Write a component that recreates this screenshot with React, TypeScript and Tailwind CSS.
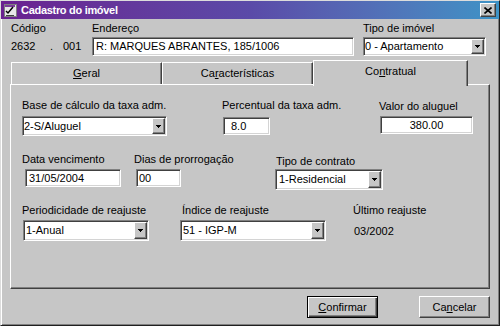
import React from 'react';

const sunken =
  'bg-white border border-t-[#808080] border-l-[#808080] border-r-white border-b-white shadow-[inset_1px_1px_#404040,inset_-1px_-1px_#d4d4d4]';
const raised =
  'bg-[#c6c6c6] border border-t-white border-l-white border-r-[#404040] border-b-[#404040] shadow-[inset_-1px_-1px_#808080]';

function Arrow() {
  return (
    <svg width="5" height="3" viewBox="0 0 5 3" shapeRendering="crispEdges">
      <path d="M0 0h5v1H0zM1 1h3v1H1zM2 2h1v1H2z" fill="#000" />
    </svg>
  );
}

function Label({ children, className }: { children: React.ReactNode; className?: string }) {
  return <div className={`h-[13px] leading-[13px] whitespace-nowrap ${className ?? ''}`}>{children}</div>;
}

function Field({ value, className }: { value: string; className?: string }) {
  return (
    <div className={`${sunken} flex items-center whitespace-nowrap overflow-hidden ${className ?? ''}`}>
      {value}
    </div>
  );
}

function Combo({ value, className, textClass }: { value: string; className?: string; textClass?: string }) {
  return (
    <div className={`${sunken} flex p-[1px] ${className ?? ''}`}>
      <span className={`flex-1 flex items-center whitespace-nowrap overflow-hidden ${textClass ?? ''}`}>{value}</span>
      <span className={`${raised} w-[13px] flex items-center justify-center`}>
        <Arrow />
      </span>
    </div>
  );
}

function Tab({ children, selected, className }: { children: React.ReactNode; selected?: boolean; className?: string }) {
  if (selected) {
    return (
      <div
        className={`relative z-10 h-[26px] -mb-[2px] bg-[#c6c6c6] border-t border-l border-r border-t-white border-l-white border-r-[#404040] shadow-[inset_-1px_0_#808080] flex justify-center pt-[4px] ${className ?? ''}`}
      >
        <span className="h-[13px] leading-[13px]">{children}</span>
      </div>
    );
  }
  return (
    <div
      className={`h-[22px] bg-[#c6c6c6] border-t border-l border-r border-t-white border-l-white border-r-[#404040] shadow-[inset_-1px_0_#808080] flex justify-center pt-[4px] ${className ?? ''}`}
    >
      <span className="h-[13px] leading-[13px]">{children}</span>
    </div>
  );
}

function TitleIcon() {
  return (
    <svg width="14" height="14" viewBox="0 0 14 14" shapeRendering="crispEdges">
      <rect x="1" y="1" width="12" height="12" fill="#e8e8e8" stroke="#808080" />
      <rect x="2" y="2" width="10" height="2" fill="#7a3d9a" />
      <path d="M3 8l2 2 5-6" stroke="#000" strokeWidth="1.5" fill="none" shapeRendering="auto" />
      <path d="M3 12h8" stroke="#404040" />
    </svg>
  );
}

export default function App() {
  return (
    <div className="w-[500px] h-[326px] bg-[#c6c6c6] border border-t-[#dcdcdc] border-l-[#dcdcdc] border-r-[#202020] border-b-[#202020] shadow-[inset_1px_1px_#fff,inset_-1px_-1px_#808080] flex flex-col text-[11px] text-black overflow-hidden font-['Liberation_Sans',Arial,sans-serif]">
      {/* title bar */}
      <div className="h-[18px] flex items-center bg-linear-to-r from-[#6a2190] via-[#5a4aa8] to-[#3c93c6]">
        <div className="ml-[2px] w-[14px] h-[14px]">
          <TitleIcon />
        </div>
        <span className="ml-[4px] pt-[1px] leading-[13px] font-bold text-white tracking-[-0.3px]">Cadastro do imóvel</span>
        <div className={`${raised} ml-auto mr-[3px] w-[16px] h-[14px] flex items-center justify-center`}>
          <svg width="8" height="7" viewBox="0 0 8 7">
            <path d="M0.5 0.5l7 6M7.5 0.5l-7 6" stroke="#000" strokeWidth="1.6" />
          </svg>
        </div>
      </div>

      {/* header fields */}
      <div className="mt-[3px] flex pl-[10px]">
        <div className="w-[81px]">
          <Label>Código</Label>
          <div className="mt-[2px] h-[19px] flex items-center">
            <span className="w-[39px]">2632</span>
            <span className="w-[13px]">.</span>
            <span>001</span>
          </div>
        </div>
        <div className="w-[271px]">
          <Label>Endereço</Label>
          <Field value="R: MARQUES ABRANTES, 185/1006" className="mt-[2px] w-[262px] h-[19px] pl-[3px]" />
        </div>
        <div className="w-[123px]">
          <Label>Tipo de imóvel</Label>
          <Combo value="0 - Apartamento" className="mt-[2px] w-[123px] h-[19px]" />
        </div>
      </div>

      {/* tabs */}
      <div className="mt-[4px] ml-[9px] w-[480px] h-[24px] pl-[1px] flex items-end">
        <Tab className="w-[151px]">
          <span className="underline">G</span>eral
        </Tab>
        <Tab className="w-[151px]">
          Ca<span className="underline">r</span>acterísticas
        </Tab>
        <Tab selected className="w-[155px]">
          Co<span className="underline">n</span>tratual
        </Tab>
      </div>
      <div className="ml-[9px] w-[480px] h-[205px] border border-t-white border-l-white border-r-[#404040] border-b-[#404040] shadow-[inset_-1px_-1px_#808080] pt-[14px] pl-[11px]">
        <div className="flex items-start">
          <div className="w-[200px]">
            <Label>Base de cálculo da taxa adm.</Label>
            <Combo value="2-S/Aluguel" className="mt-[4px] w-[145px] h-[20px]" />
          </div>
          <div className="w-[157px]">
            <Label>Percentual da taxa adm.</Label>
            <Field value="8.0" className="ml-[1px] mt-[5px] w-[47px] h-[18px] pl-[7px]" />
          </div>
          <div>
            <Label className="mt-[1px]">Valor do aluguel</Label>
            <Field value="380.00" className="ml-[1px] mt-[3px] w-[93px] h-[18px] justify-center" />
          </div>
        </div>

        <div className="mt-[17px] flex items-start">
          <div className="w-[112px]">
            <Label>Data vencimento</Label>
            <Field value="31/05/2004" className="ml-[3px] mt-[3px] w-[96px] h-[18px] pl-[3px]" />
          </div>
          <div className="w-[141px]">
            <Label>Dias de prorrogação</Label>
            <Field value="00" className="ml-[2px] mt-[3px] w-[45px] h-[18px] pl-[2px]" />
          </div>
          <div>
            <Label className="mt-[2px] ml-[1px]">Tipo de contrato</Label>
            <Combo value="1-Residencial" className="mt-[1px] w-[108px] h-[21px]" textClass="pl-[2px]" />
          </div>
        </div>

        <div className="mt-[14px] flex items-start">
          <div className="w-[158px]">
            <Label>Periodicidade de reajuste</Label>
            <Combo value="1-Anual" className="ml-[1px] mt-[3px] w-[126px] h-[21px]" textClass="pl-[1px]" />
          </div>
          <div className="w-[173px]">
            <Label className="ml-[2px]">Índice de reajuste</Label>
            <Combo value="51 - IGP-M" className="mt-[3px] w-[146px] h-[21px]" textClass="pl-[1px]" />
          </div>
          <div>
            <Label>Último reajuste</Label>
            <div className="ml-[1px] mt-[8px] h-[13px] leading-[13px]">03/2002</div>
          </div>
        </div>
      </div>

      {/* buttons */}
      <div className="mt-[7px] ml-[9px] w-[480px] flex justify-end gap-[41px]">
        <button className="w-[71px] h-[22px] bg-[#c6c6c6] border border-black shadow-[inset_1px_1px_#fff,inset_-1px_-1px_#404040,inset_-2px_-2px_#808080] leading-[13px]">
          <span className="underline">C</span>onfirmar
        </button>
        <button className={`${raised} w-[71px] h-[22px] leading-[13px]`}>
          Ca<span className="underline">n</span>celar
        </button>
      </div>
    </div>
  );
}
